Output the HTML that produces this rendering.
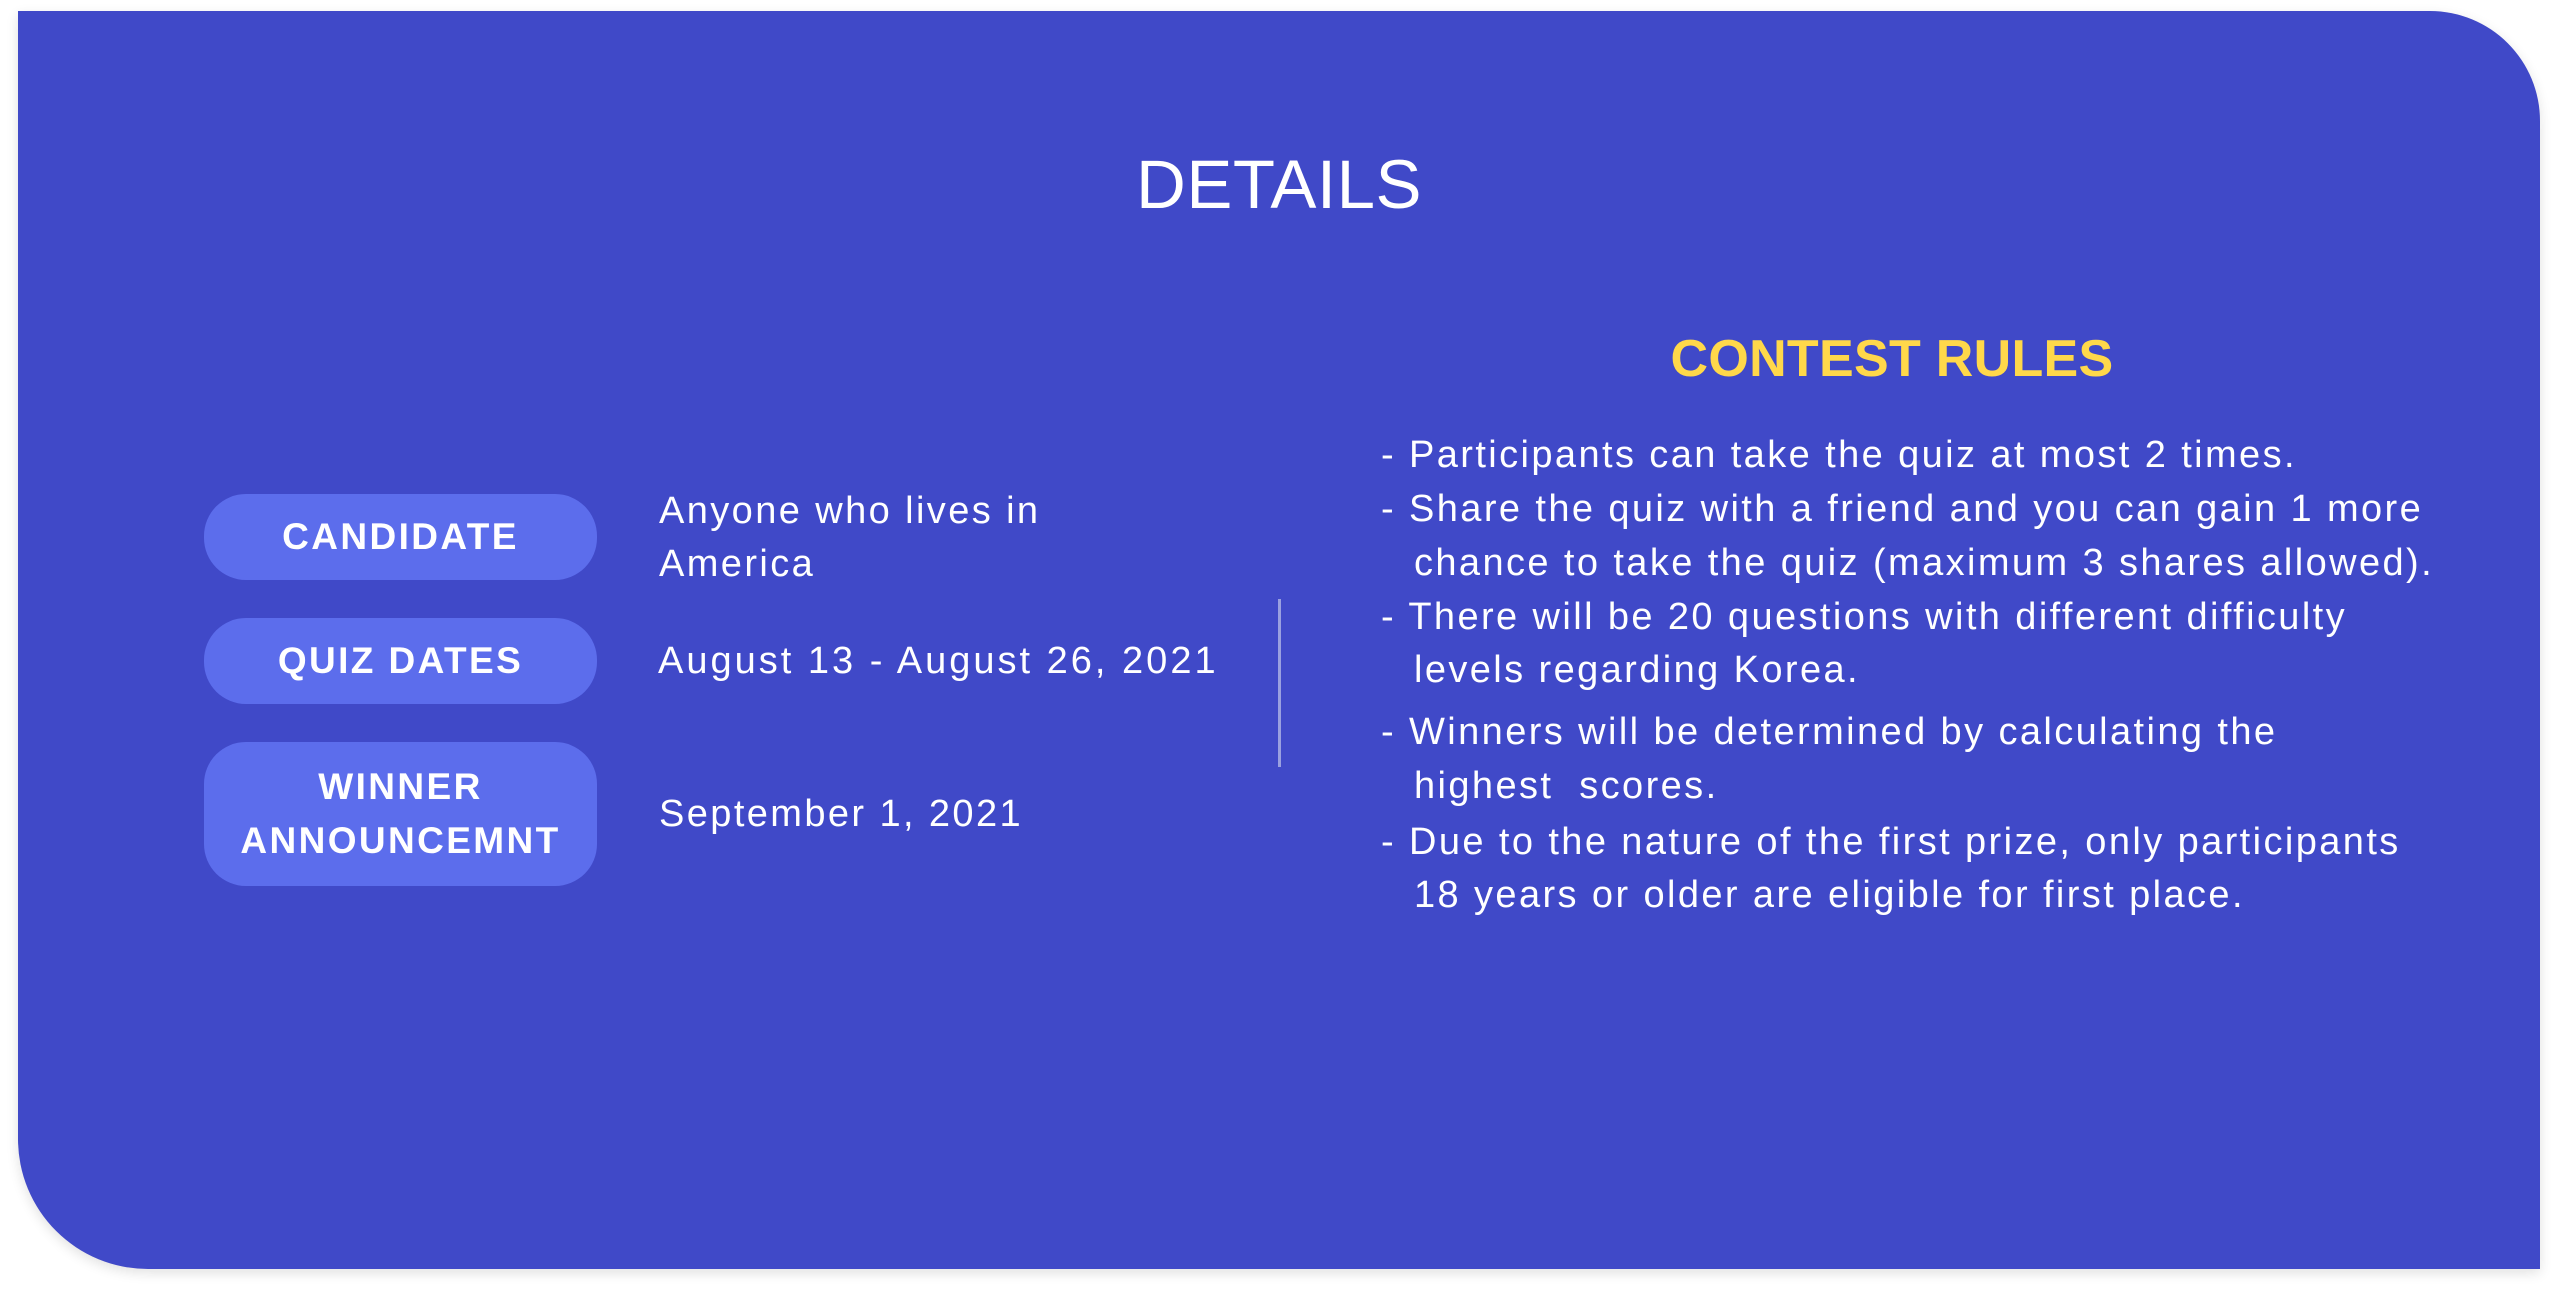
<!DOCTYPE html>
<html><head><meta charset="utf-8"><style>
html,body{margin:0;padding:0;background:#fff;}
body{width:2558px;height:1294px;position:relative;overflow:hidden;font-family:"Liberation Sans",sans-serif;color:#fff;}
.card{position:absolute;left:18px;top:11px;width:2522px;height:1258px;background:#4049C8;border-radius:0 110px 0 130px;box-shadow:0 4px 12px rgba(0,0,0,0.12);}
.t{position:absolute;white-space:nowrap;font-size:38px;line-height:54px;letter-spacing:2.4px;}
.pill{position:absolute;left:204px;width:393px;background:#5C6DEC;border-radius:42px;display:flex;align-items:center;justify-content:center;text-align:center;font-weight:bold;font-size:37px;line-height:54px;letter-spacing:2.4px;}
</style></head><body>
<div class="card"></div>
<div class="t" style="left:0;width:2558px;text-align:center;top:143px;font-size:69px;line-height:84px;letter-spacing:0.5px;">DETAILS</div>
<div class="t" style="left:1492px;width:800px;text-align:center;top:326px;font-size:52px;line-height:66px;font-weight:bold;color:#FFD84A;letter-spacing:0.3px;">CONTEST RULES</div>

<div class="pill" style="top:494px;height:86px;">CANDIDATE</div>
<div class="pill" style="top:618px;height:86px;">QUIZ DATES</div>
<div class="pill" style="top:742px;height:144px;">WINNER<br>ANNOUNCEMNT</div>

<div class="t" style="left:659px;top:484px;">Anyone who lives in</div>
<div class="t" style="left:659px;top:537px;">America</div>
<div class="t" style="left:658px;top:634px;letter-spacing:3px;">August 13 - August 26, 2021</div>
<div class="t" style="left:659px;top:787px;">September 1, 2021</div>

<div style="position:absolute;left:1278px;top:599px;width:3px;height:168px;background:#9aa0e0;"></div>

<div class="t" style="left:1381px;top:428px;">- Participants can take the quiz at most 2 times.</div>
<div class="t" style="left:1381px;top:482px;">- Share the quiz with a friend and you can gain 1 more</div>
<div class="t" style="left:1414px;top:536px;">chance to take the quiz (maximum 3 shares allowed).</div>
<div class="t" style="left:1381px;top:590px;">- There will be 20 questions with different difficulty</div>
<div class="t" style="left:1414px;top:643px;">levels regarding Korea.</div>
<div class="t" style="left:1381px;top:705px;">- Winners will be determined by calculating the</div>
<div class="t" style="left:1414px;top:759px;">highest &nbsp;scores.</div>
<div class="t" style="left:1381px;top:815px;">- Due to the nature of the first prize, only participants</div>
<div class="t" style="left:1414px;top:868px;">18 years or older are eligible for first place.</div>
</body></html>
